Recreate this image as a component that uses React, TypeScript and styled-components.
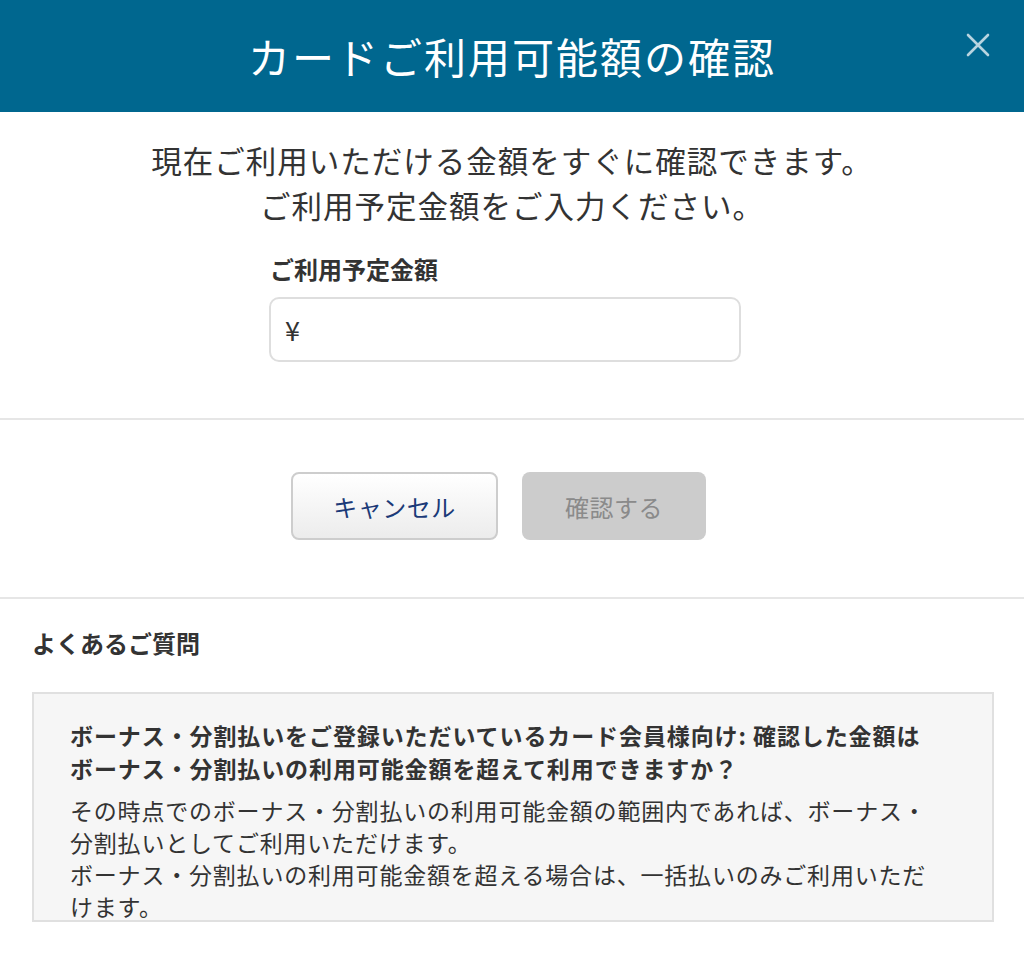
import React from 'react';
import styled, { createGlobalStyle } from 'styled-components';

const GlobalStyle = createGlobalStyle`
  html, body {
    margin: 0;
    padding: 0;
    background: #fff;
    overflow: hidden;
  }
  body {
    font-family: 'Noto Sans CJK JP', 'Noto Sans', sans-serif;
    color: #333;
  }
  * {
    box-sizing: border-box;
  }
`;

const Modal = styled.div`
  width: 1024px;
  height: 956px;
  display: flex;
  flex-direction: column;
  background: #fff;
`;

const Header = styled.header`
  position: relative;
  height: 112px;
  background: #00678f;
  display: flex;
  align-items: center;
  justify-content: center;
`;

const Title = styled.h1`
  margin: 0;
  font-size: 42px;
  font-weight: 400;
  color: #fff;
  line-height: 1;
  letter-spacing: 2px;
`;

const CloseButton = styled.button`
  position: absolute;
  top: 33px;
  right: 34px;
  width: 24px;
  height: 24px;
  padding: 0;
  border: 0;
  background: transparent;
  cursor: pointer;
  display: flex;
  align-items: center;
  justify-content: center;
`;

const Intro = styled.p`
  margin: 26px 0 0;
  font-size: 30.5px;
  line-height: 45px;
  letter-spacing: 1px;
  text-align: center;
  color: #333;
`;

const FormRow = styled.div`
  display: flex;
  justify-content: center;
  padding-right: 14px;
  margin-top: 24px;
`;

const Field = styled.div`
  width: 472px;
  display: flex;
  flex-direction: column;
`;

const Label = styled.label`
  font-size: 24px;
  font-weight: 700;
  line-height: 34px;
  padding-left: 1px;
  color: #333;
`;

const InputBox = styled.div`
  margin-top: 11px;
  height: 65px;
  border: 2px solid #dedede;
  border-radius: 10px;
  display: flex;
  align-items: center;
  padding: 0 14px;
  gap: 4px;
`;

const Yen = styled.span`
  font-size: 27px;
  color: #333;
`;

const AmountInput = styled.input`
  flex: 1;
  border: 0;
  outline: none;
  font-family: inherit;
  font-size: 24px;
  background: transparent;
  color: #333;
`;

const Divider = styled.hr<{ $top: number }>`
  margin: ${p => p.$top}px 0 0;
  border: 0;
  border-top: 2px solid #e6e6e6;
  width: 100%;
`;

const Actions = styled.div`
  display: flex;
  justify-content: center;
  gap: 24px;
  padding-right: 27px;
  margin-top: 52px;
  height: 68px;
`;

const Button = styled.button<{ $primary?: boolean; $width: number }>`
  width: ${p => p.$width}px;
  height: 68px;
  border-radius: 8px;
  font-family: inherit;
  font-size: 24px;
  letter-spacing: 0.5px;
  cursor: pointer;
  border: ${p => (p.$primary ? '0' : '2px solid #cdcdcd')};
  color: ${p => (p.$primary ? '#8a8a8a' : '#1b3a78')};
  background: ${p =>
    p.$primary ? '#cccccc' : 'linear-gradient(#ffffff, #ececec)'};
  &:disabled {
    cursor: default;
  }
`;

const Faq = styled.section`
  margin-top: 27px;
  padding: 0 30px 0 32px;
  display: flex;
  flex-direction: column;
`;

const FaqTitle = styled.h2`
  margin: 0;
  font-size: 24px;
  font-weight: 700;
  line-height: 34px;
  color: #333;
`;

const FaqBox = styled.div`
  margin-top: 32px;
  height: 230px;
  overflow: hidden;
  background: #f6f6f6;
  border: 2px solid #e0e0e0;
  padding: 25px 58px 0 36px;
`;

const Question = styled.p`
  margin: 0;
  font-size: 23px;
  font-weight: 700;
  line-height: 33px;
  letter-spacing: 0.9px;
  color: #333;
`;

const Answer = styled.p`
  margin: 9px 0 0;
  font-size: 23px;
  line-height: 32px;
  letter-spacing: 0.8px;
  color: #333;
`;

const CloseIcon = () => (
  <svg width="24" height="24" viewBox="0 0 24 24">
    <path
      d="M2 2 L22 22 M22 2 L2 22"
      stroke="rgba(255,255,255,0.72)"
      strokeWidth="2.6"
      strokeLinecap="round"
    />
  </svg>
);

const App: React.FC = () => (
  <>
    <GlobalStyle />
    <Modal>
      <Header>
        <Title>カードご利用可能額の確認</Title>
        <CloseButton aria-label="閉じる">
          <CloseIcon />
        </CloseButton>
      </Header>

      <Intro>
        現在ご利用いただける金額をすぐに確認できます。
        <br />
        ご利用予定金額をご入力ください。
      </Intro>

      <FormRow>
        <Field>
          <Label htmlFor="amount">ご利用予定金額</Label>
          <InputBox>
            <Yen>¥</Yen>
            <AmountInput id="amount" type="text" inputMode="numeric" />
          </InputBox>
        </Field>
      </FormRow>

      <Divider $top={56} />

      <Actions>
        <Button $width={207}>キャンセル</Button>
        <Button $width={184} $primary disabled>
          確認する
        </Button>
      </Actions>

      <Divider $top={57} />

      <Faq>
        <FaqTitle>よくあるご質問</FaqTitle>
        <FaqBox>
          <Question>
            ボーナス・分割払いをご登録いただいているカード会員様向け: 確認した金額は
            <br />
            ボーナス・分割払いの利用可能金額を超えて利用できますか？
          </Question>
          <Answer>
            その時点でのボーナス・分割払いの利用可能金額の範囲内であれば、ボーナス・分割払いとしてご利用いただけます。
            <br />
            ボーナス・分割払いの利用可能金額を超える場合は、一括払いのみご利用いただけます。
          </Answer>
        </FaqBox>
      </Faq>
    </Modal>
  </>
);

export default App;
